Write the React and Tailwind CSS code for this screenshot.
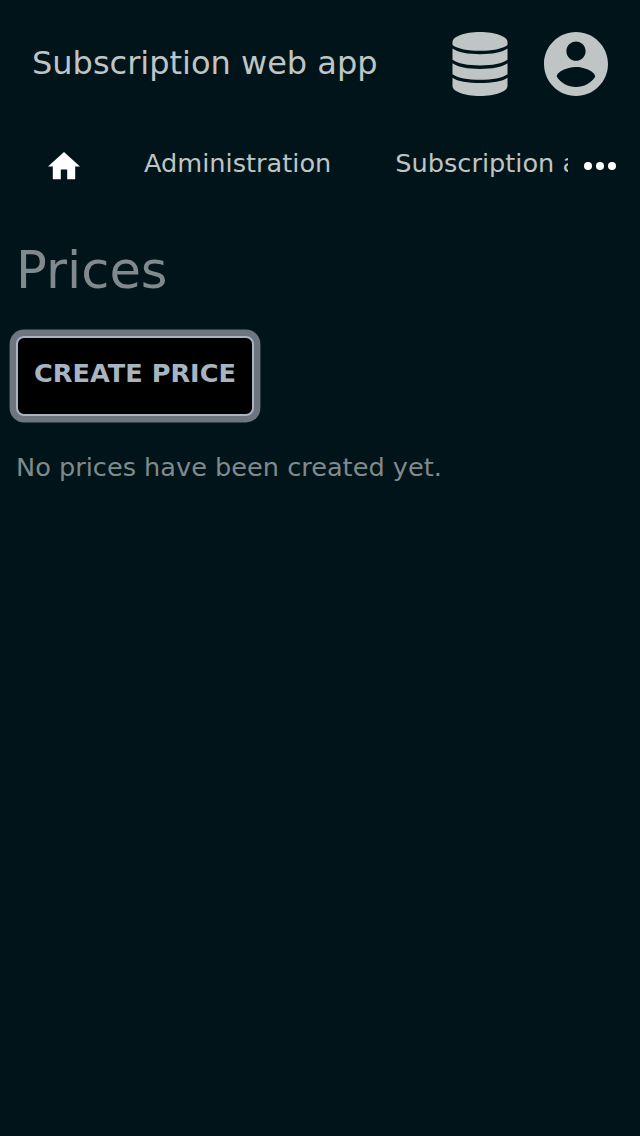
function DatabaseIcon() {
  return (
    <svg viewBox="0 0 56 64" className="h-16 w-14" fill="currentColor" aria-hidden="true">
      <path d="M28 0C43.500 0 55.500 4.500 55.500 10v3C50.500 17 40 18.800 28 18.800S5.500 17 0.500 13v-3C0.500 4.500 12.500 0 28 0z" />
      <path d="M0.500 16.500C5.500 20.300 16 22.200 28 22.200S50.500 20.300 55.500 16.500V27.800C50.500 31.600 40 33.500 28 33.500S5.500 31.600 0.500 27.800z" />
      <path d="M0.500 31.200C5.500 35 16 36.900 28 36.900S50.500 35 55.500 31.200V42.200C50.500 46 40 47.800 28 47.800S5.500 46 0.500 42.200z" />
      <path d="M0.500 45.700C5.500 49.400 16 51 28 51S50.500 49.400 55.500 45.700V54C55.500 59.500 43.500 64 28 64S0.500 59.500 0.500 54z" />
    </svg>
  );
}

function AccountIcon() {
  return (
    <svg viewBox="2 2 20 20" className="size-16" fill="currentColor" aria-hidden="true">
      <path d="M12 2C6.480 2 2 6.480 2 12s4.480 10 10 10 10-4.480 10-10S17.520 2 12 2zm0 3c1.660 0 3 1.340 3 3s-1.340 3-3 3-3-1.340-3-3 1.340-3 3-3zm0 14.200c-2.500 0-4.710-1.280-6-3.220.030-1.990 4-3.080 6-3.080 1.990 0 5.970 1.090 6 3.080-1.290 1.940-3.500 3.220-6 3.220z" />
    </svg>
  );
}

function HomeIcon() {
  return (
    <svg viewBox="2 3 20 17" className="mt-1 ml-12 h-[27.2px] w-8 shrink-0 text-white" fill="currentColor" aria-hidden="true">
      <path d="M10 20v-6h4v6h5v-8h3L12 3 2 12h3v8z" />
    </svg>
  );
}

function MoreIcon() {
  return (
    <svg viewBox="0 0 32 8" className="mt-1 ml-4 h-2 w-8 shrink-0 text-white" fill="currentColor" aria-hidden="true">
      <circle cx="4" cy="4" r="4" />
      <circle cx="16" cy="4" r="4" />
      <circle cx="28" cy="4" r="4" />
    </svg>
  );
}

export default function App() {
  return (
    <div className="min-h-screen overflow-hidden bg-[#001419] font-['DejaVu_Sans',sans-serif] text-[#808a8c]">
      <header className="flex h-32 items-center justify-between px-8 text-[#bfc4c5]">
        <span className="-mt-0.5 text-[32px]">Subscription web app</span>
        <div className="flex gap-9">
          <DatabaseIcon />
          <AccountIcon />
        </div>
      </header>
      <nav className="flex h-[72px] items-center text-[25.6px] text-[#bfc4c5]">
        <HomeIcon />
        <span className="-mt-0.5 ml-16">Administration</span>
        <span className="-mt-0.5 ml-16 w-[173px] overflow-hidden whitespace-nowrap">Subscription administration</span>
        <MoreIcon />
      </nav>
      <main className="px-4 pt-8">
        <h1 className="text-[51.2px] leading-[77px]">Prices</h1>
        <button className="mt-[27px] block h-20 rounded-lg border-2 border-[#a8b4c0] bg-black px-4 pb-1.5 text-[25.6px] font-bold text-[#a8b4c0] ring-[6.4px] ring-[#6d757e]">CREATE PRICE</button>
        <p className="mt-8 text-[25.6px] leading-[38.4px]">No prices have been created yet.</p>
      </main>
    </div>
  );
}
